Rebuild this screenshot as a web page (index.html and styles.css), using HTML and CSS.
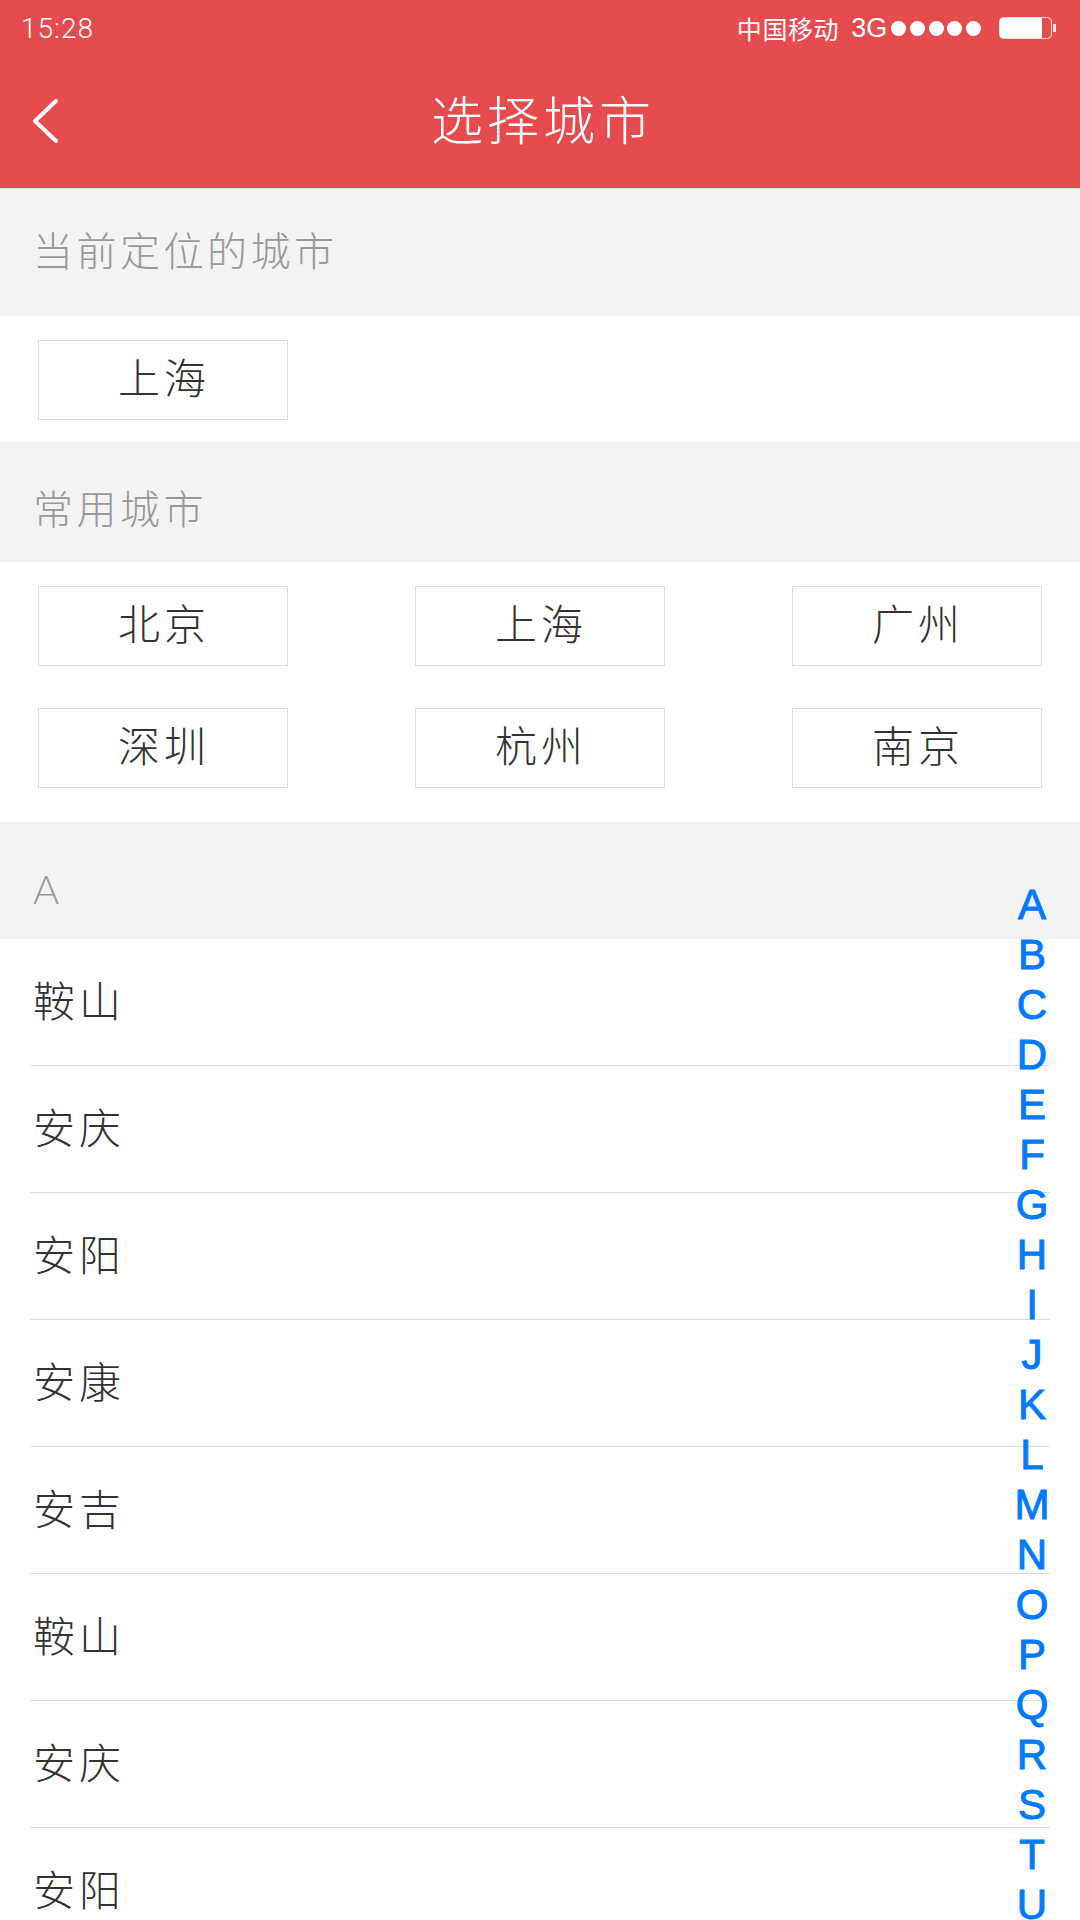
FILE: index.html
```html
<!DOCTYPE html>
<html lang="zh-CN">
<head>
  <meta charset="UTF-8">
  <title>选择城市</title>
  <link rel="stylesheet" href="styles.css">
</head>
<body>
  <div class="pagina">
    <header class="cabecera">
      <div class="estado">
        <span class="hora">15:28</span>
        <div class="estado-der">
          <span class="operador">中国移动</span>
          <span class="red">3G</span>
          <div class="senal"><i></i><i></i><i></i><i></i><i></i></div>
          <svg class="bateria" width="57" height="24" viewBox="0 0 57 24">
            <rect x="0.5" y="1.5" width="52" height="21" rx="4" fill="none" stroke="#fff" stroke-opacity="0.8"/>
            <path d="M4 2h39v20H4a3 3 0 0 1-3-3V5a3 3 0 0 1 3-3z" fill="#fff"/>
            <rect x="54" y="8" width="3" height="8" fill="#fff" fill-opacity="0.85"/>
          </svg>
        </div>
      </div>
      <div class="titulo-barra">
        <svg class="volver" width="30" height="48" viewBox="0 0 30 48">
          <path d="M24 5 L3 25 L24 45" fill="none" stroke="#fff" stroke-width="4" stroke-linecap="round" stroke-linejoin="round"/>
        </svg>
        <h1>选择城市</h1>
      </div>
    </header>

    <h2 class="seccion seccion-actual">当前定位的城市</h2>
    <div class="celdas celdas-actual">
      <div class="ciudad">上海</div>
    </div>

    <h2 class="seccion seccion-comun">常用城市</h2>
    <div class="celdas celdas-comun">
      <div class="ciudad">北京</div>
      <div class="ciudad">上海</div>
      <div class="ciudad">广州</div>
      <div class="ciudad">深圳</div>
      <div class="ciudad">杭州</div>
      <div class="ciudad">南京</div>
    </div>

    <h2 class="seccion seccion-letra">A</h2>
    <ul class="lista">
      <li>鞍山</li>
      <li>安庆</li>
      <li>安阳</li>
      <li>安康</li>
      <li>安吉</li>
      <li>鞍山</li>
      <li>安庆</li>
      <li>安阳</li>
    </ul>

    <nav class="indice">
      <span>A</span><span>B</span><span>C</span><span>D</span><span>E</span><span>F</span><span>G</span>
      <span>H</span><span>I</span><span>J</span><span>K</span><span>L</span><span>M</span><span>N</span>
      <span>O</span><span>P</span><span>Q</span><span>R</span><span>S</span><span>T</span><span>U</span>
    </nav>
  </div>
</body>
</html>
```

FILE: styles.css
```css
* {
  box-sizing: border-box;
}

html, body {
  margin: 0;
  padding: 0;
}

body {
  font-family: "Noto Sans CJK SC", "Liberation Sans", sans-serif;
  font-weight: 300;
  background-color: #fff;
  color: #333;
}

.pagina {
  position: relative;
  width: 1080px;
  height: 1920px;
  overflow: hidden;
}

.cabecera {
  height: 189px;
  background-color: #e64c4e;
  border-bottom: 1px solid #ddd;
  color: #fff;
}

.estado {
  display: flex;
  justify-content: space-between;
  align-items: center;
  height: 56px;
  padding: 0 24px 0 21px;
}

.hora {
  font-family: Roboto, "Liberation Sans", sans-serif;
  font-size: 28px;
  font-weight: 300;
  letter-spacing: 1px;
}

.estado-der {
  display: flex;
  align-items: center;
}

.operador {
  font-size: 25px;
  font-weight: 400;
  letter-spacing: 0.6px;
}

.red {
  margin-left: 12px;
  font-family: "Liberation Sans", sans-serif;
  font-size: 27px;
  font-weight: 400;
}

.senal {
  display: flex;
  gap: 3.7px;
  margin-left: 4px;
}

.senal i {
  display: block;
  width: 15px;
  height: 15px;
  border-radius: 50%;
  background-color: #fff;
}

.bateria {
  margin-left: 18px;
}

.titulo-barra {
  position: relative;
  display: flex;
  justify-content: center;
  align-items: center;
  height: 132px;
  padding: 0 0 10px 6px;
}

.titulo-barra h1 {
  margin: 0;
  font-size: 52px;
  font-weight: 300;
  letter-spacing: 4px;
}

.volver {
  position: absolute;
  left: 32px;
  top: 40px;
}

.seccion {
  margin: 0;
  padding-left: 33px;
  background-color: #f3f3f3;
  color: #999;
  font-size: 40px;
  font-weight: 300;
  letter-spacing: 3.5px;
  line-height: 58px;
}

.seccion-actual {
  height: 127px;
  padding-top: 31px;
}

.seccion-comun {
  height: 120px;
  padding-top: 36px;
}

.seccion-letra {
  height: 117px;
  padding-top: 38px;
  font-family: Lato, "Liberation Sans", sans-serif;
}

.celdas {
  display: grid;
  grid-template-columns: repeat(3, 250px);
  justify-content: space-between;
  padding: 0 38px;
}

.celdas-actual {
  height: 126px;
  padding-top: 24px;
}

.celdas-comun {
  height: 260px;
  padding-top: 24px;
  row-gap: 42px;
  align-content: start;
}

.ciudad {
  height: 80px;
  border: 1px solid #ddd;
  font-size: 42px;
  letter-spacing: 4px;
  line-height: 69px;
  text-align: center;
  text-indent: 2px;
}

.lista {
  margin: 0;
  padding: 0 30px;
  list-style: none;
}

.lista li {
  height: 127px;
  padding-left: 3px;
  border-bottom: 1px solid #ddd;
  font-size: 42px;
  letter-spacing: 4px;
  line-height: 119px;
}

.indice {
  position: absolute;
  top: 880px;
  left: 1004px;
  width: 56px;
  display: flex;
  flex-direction: column;
  align-items: center;
  font-family: "Liberation Sans", sans-serif;
  font-size: 42px;
  font-weight: 400;
  color: #007aff;
  -webkit-text-stroke: 1px #007aff;
}

.indice span {
  height: 50px;
  line-height: 50px;
}
```
